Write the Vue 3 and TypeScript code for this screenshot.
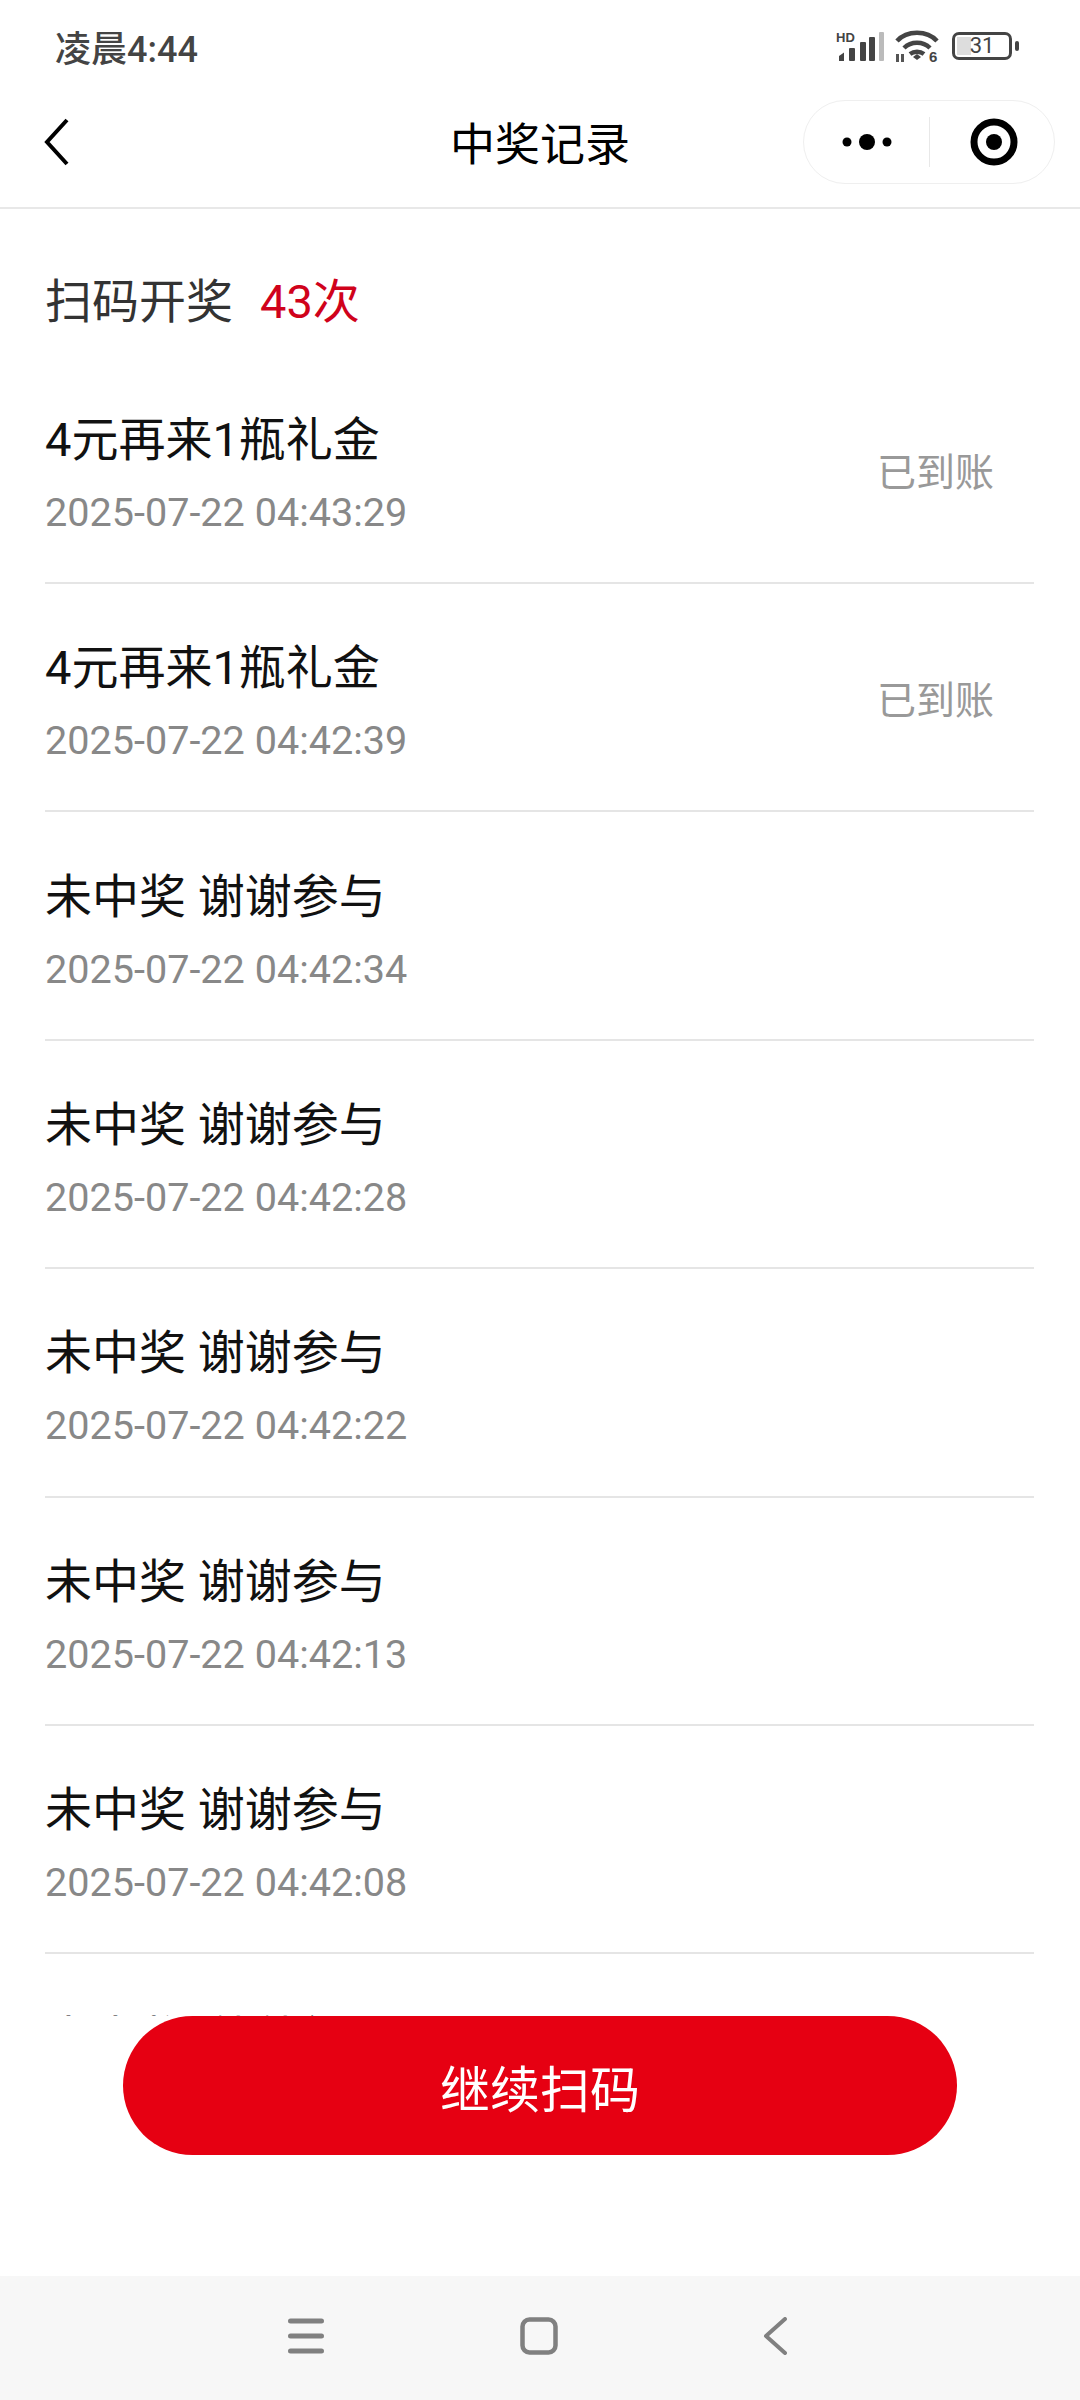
<template>
  <div class="page">
    <div class="status">
      <span class="time">凌晨4:44</span>
      <div class="status-icons">
        <svg class="signal" width="48" height="30" viewBox="0 0 48 30">
          <text x="0" y="11" class="hd">HD</text>
          <path d="M3 25l5-3.500V30H3z" fill="#444" />
          <rect x="13" y="17" width="6" height="13" rx="1" fill="#444" />
          <rect x="24" y="11" width="6" height="19" rx="1" fill="#444" />
          <rect x="33" y="6" width="6" height="24" rx="1" fill="#444" />
          <rect x="43" y="1" width="5" height="29" rx="1" fill="#bbb" />
        </svg>
        <svg class="wifi" width="44" height="32" viewBox="0 0 44 32">
          <path d="M2 11C12 0 32 0 42 11M9 18c7-7 19-7 26 0M15 24c4-3 10-3 14 0" fill="none" stroke="#444" stroke-width="4.500" />
          <path d="M18 27l4-3 4 3-4 3z" fill="#444" />
          <path d="M1 24h3v8H1zM6 24h3v8H6z" fill="#555" />
          <text x="34" y="32" class="six">6</text>
        </svg>
        <div class="battery">
          <div class="battery-body">
            <div class="battery-fill"></div>
            <span class="battery-num">31</span>
          </div>
          <div class="battery-tip"></div>
        </div>
      </div>
    </div>
    <div class="nav">
      <svg class="back" width="26" height="48" viewBox="0 0 26 48">
        <path d="M23 2L3 24l20 22" fill="none" stroke="#000" stroke-width="4" />
      </svg>
      <div class="nav-title">中奖记录</div>
      <div class="capsule">
        <div class="capsule-side">
          <svg width="50" height="18" viewBox="0 0 50 18">
            <circle cx="5" cy="9" r="4.500" fill="#000" />
            <circle cx="25" cy="9" r="8" fill="#000" />
            <circle cx="45" cy="9" r="4.500" fill="#000" />
          </svg>
        </div>
        <div class="capsule-line"></div>
        <div class="capsule-side target">
          <svg width="48" height="48" viewBox="0 0 48 48">
            <circle cx="24" cy="24" r="20" fill="none" stroke="#000" stroke-width="7" />
            <circle cx="24" cy="24" r="8" fill="#000" />
          </svg>
        </div>
      </div>
    </div>
    <div class="content">
      <div class="summary">
        <span>扫码开奖</span>
        <span class="count">43次</span>
      </div>
      <div class="row" v-for="(item, index) in records" :key="index">
        <div class="info">
          <div class="name">{{ item.name }}</div>
          <div class="date">{{ item.date }}</div>
        </div>
        <div class="state" v-if="item.state">{{ item.state }}</div>
      </div>
    </div>
    <div class="footer">
      <div class="btn">继续扫码</div>
    </div>
    <div class="sysbar">
      <svg width="36" height="36" viewBox="0 0 36 36">
        <path d="M2.500 3h31M2.500 18h31M2.500 33h31" fill="none" stroke="#808080" stroke-width="5" stroke-linecap="round" />
      </svg>
      <svg width="38" height="38" viewBox="0 0 38 38">
        <rect x="2.500" y="2.500" width="33" height="33" rx="7" fill="none" stroke="#808080" stroke-width="4.500" />
      </svg>
      <svg class="sys-back" width="24" height="38" viewBox="0 0 24 38">
        <path d="M22 2L3 19l19 17" fill="none" stroke="#808080" stroke-width="4" stroke-linecap="round" stroke-linejoin="round" />
      </svg>
    </div>
  </div>
</template>

<script setup lang="ts">
interface PrizeRecord {
  name: string,
  date: string,
  state?: string,
}

const records: PrizeRecord[] = [
  {name: '4元再来1瓶礼金', date: '2025-07-22 04:43:29', state: '已到账'},
  {name: '4元再来1瓶礼金', date: '2025-07-22 04:42:39', state: '已到账'},
  {name: '未中奖 谢谢参与', date: '2025-07-22 04:42:34'},
  {name: '未中奖 谢谢参与', date: '2025-07-22 04:42:28'},
  {name: '未中奖 谢谢参与', date: '2025-07-22 04:42:22'},
  {name: '未中奖 谢谢参与', date: '2025-07-22 04:42:13'},
  {name: '未中奖 谢谢参与', date: '2025-07-22 04:42:08'},
  {name: '未中奖 谢谢参与', date: '2025-07-22 04:42:02'},
];
</script>

<style>
body {
  background: #fff;
}
</style>

<style scoped>
.page {
  width: 1080px;
  height: 2400px;
  display: flex;
  flex-direction: column;
  overflow: hidden;
  background: #fff;
  font-family: Roboto, "Noto Sans CJK SC", sans-serif;
}

.status {
  height: 72px;
  flex-shrink: 0;
  display: flex;
  align-items: center;
  justify-content: space-between;
  padding: 0 61px 0 55px;
  box-sizing: border-box;
}

.time {
  font-size: 36px;
  font-weight: 500;
  color: #444;
  position: relative;
  top: 10px;
}

.status-icons {
  display: flex;
  align-items: center;
  gap: 11px;
  position: relative;
  top: 10px;
}

.hd {
  font: bold 13px "Liberation Sans", sans-serif;
  fill: #444;
}

.six {
  font: bold 15px "Liberation Sans", sans-serif;
  fill: #444;
}

.battery {
  display: flex;
  align-items: center;
  gap: 3px;
  margin-left: 2px;
}

.battery-body {
  width: 60px;
  height: 28px;
  border: 3px solid #444;
  border-radius: 7px;
  box-sizing: border-box;
  position: relative;
  display: flex;
  align-items: center;
  justify-content: center;
}

.battery-fill {
  position: absolute;
  left: 2px;
  top: 2px;
  bottom: 2px;
  width: 14px;
  background: #ddd;
}

.battery-num {
  position: relative;
  font-size: 22px;
  line-height: 20px;
  color: #444;
}

.battery-tip {
  width: 4px;
  height: 10px;
  border-radius: 2px;
  background: #444;
}

.nav {
  height: 137px;
  flex-shrink: 0;
  display: flex;
  align-items: center;
  padding: 4px 25px 0 44px;
  box-sizing: border-box;
  border-bottom: 2px solid #e8e8e8;
  position: relative;
}

.nav-title {
  position: absolute;
  left: 0;
  right: 0;
  text-align: center;
  font-size: 45px;
  color: #000;
}

.capsule {
  margin-left: auto;
  width: 252px;
  height: 84px;
  border: 1px solid #efefef;
  border-radius: 42px;
  box-sizing: border-box;
  display: flex;
  align-items: center;
  position: relative;
}

.capsule-side {
  width: 125px;
  display: flex;
  justify-content: center;
  align-items: center;
}

.target {
  flex: 1;
  padding-left: 4px;
  box-sizing: border-box;
}

.capsule-line {
  width: 1px;
  height: 50px;
  background: #e8e8e8;
}

.content {
  flex: 1;
  overflow: hidden;
  padding: 0 46px 0 45px;
}

.summary {
  height: 146.600px;
  padding-top: 50px;
  box-sizing: border-box;
  display: flex;
  align-items: flex-start;
  gap: 27px;
  font-size: 47px;
  line-height: 86px;
  color: #333;
}

.count {
  color: #d0021b;
}

.row {
  height: 228.400px;
  box-sizing: border-box;
  border-bottom: 2px solid #e5e5e5;
  display: flex;
  align-items: center;
  justify-content: space-between;
  padding: 6px 40px 6px 0;
}

.info {
  padding-top: 8px;
}

.name {
  font-size: 47px;
  line-height: 64px;
  color: #111;
}

.date {
  margin-top: 16px;
  font-size: 39.600px;
  line-height: 50px;
  color: #888;
}

.state {
  font-size: 39px;
  color: #999;
}

.footer {
  height: 260px;
  flex-shrink: 0;
  background: #fff;
  display: flex;
  justify-content: center;
}

.btn {
  width: 834px;
  height: 139px;
  border-radius: 70px;
  background: #e60012;
  color: #fff;
  font-size: 50px;
  display: flex;
  align-items: center;
  justify-content: center;
}

.sysbar {
  height: 124px;
  flex-shrink: 0;
  background: #f7f7f7;
  display: flex;
  align-items: center;
  justify-content: center;
  gap: 196px;
  padding: 0 5px 5px 0;
  box-sizing: border-box;
}

.sys-back {
  margin-left: 9px;
}
</style>
